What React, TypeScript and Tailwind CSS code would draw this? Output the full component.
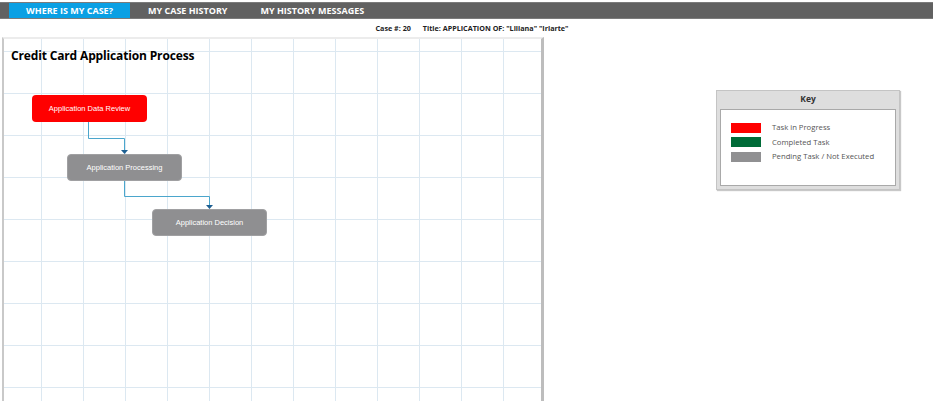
import React from 'react';

const font = { open: 'font-["Open_Sans",sans-serif]', arial: 'font-["Liberation_Sans",Arial,sans-serif]' };

const tabs = ['WHERE IS MY CASE?', 'MY CASE HISTORY', 'MY HISTORY MESSAGES'];

const legend = [
  { color: 'bg-[#ff0000]', label: 'Task in Progress' },
  { color: 'bg-[#006b38]', label: 'Completed Task' },
  { color: 'bg-[#909092]', label: 'Pending Task / Not Executed' },
];

function Node({ label, className }: { label: string; className: string }) {
  return (
    <div
      className={`absolute w-[115px] h-[27px] rounded-[4px] flex items-center justify-center text-white text-[7.5px] ${font.arial} ${className}`}
    >
      {label}
    </div>
  );
}

function Canvas() {
  const vLines = Array.from({ length: 13 }, (_, i) => 37.5 + i * 42);
  const hLines = Array.from({ length: 9 }, (_, i) => 12.5 + i * 42);
  return (
    <div className="relative w-[542px] h-[364px] border-l-2 border-r-[3px] border-t-2 border-l-[#c9c9c9] border-r-[#bdbdbd] border-t-[#ececec] overflow-hidden">
      <svg className="absolute inset-0" width="537" height="362">
        {vLines.map((x) => (
          <line key={'v' + x} x1={x} y1={0} x2={x} y2={362} stroke="#dce8f1" strokeWidth={1} />
        ))}
        {hLines.map((y) => (
          <line key={'h' + y} x1={0} y1={y} x2={537} y2={y} stroke="#dce8f1" strokeWidth={1} />
        ))}
        <polyline points="84.5,83 84.5,99.5 120.5,99.5 120.5,112" fill="none" stroke="#4ba6cc" strokeWidth={1} />
        <polygon points="117,111 124,111 120.5,115" fill="#1d5f92" />
        <polyline points="120.5,142 120.5,157.5 205.5,157.5 205.5,167" fill="none" stroke="#4ba6cc" strokeWidth={1} />
        <polygon points="202,166 209,166 205.5,170" fill="#1d5f92" />
      </svg>
      <div className={`absolute left-[7px] top-[8px] text-[12px] font-bold text-black ${font.open} tracking-[-0.15px]`}>
        Credit Card Application Process
      </div>
      <Node label="Application Data Review" className="left-[28px] top-[56px] bg-[#ff0000]" />
      <Node label="Application Processing" className="left-[63px] top-[115px] bg-[#8f8f91] border border-[#a0a0a2]" />
      <Node label="Application Decision" className="left-[148px] top-[170px] bg-[#8f8f91] border border-[#a0a0a2]" />
    </div>
  );
}

function Key() {
  return (
    <div className="w-[184px] h-[100px] mt-[53px] ml-[172px] border border-[#c4c4c4] bg-[#dedede] shadow-[1px_1px_1px_#c8c8c8]">
      <div className={`h-[16px] flex items-center justify-center text-[8.5px] font-bold text-[#333] ${font.open}`}>Key</div>
      <div className="mx-[3px] mt-[2px] h-[77px] bg-white border border-[#a9a9a9] pt-[12px] pl-[10px] flex flex-col gap-[3px]">
        {legend.map((l) => (
          <div key={l.label} className="flex items-center">
            <div className={`w-[30px] h-[10px] ${l.color}`} />
            <span className={`ml-[11px] text-[7.7px] text-[#555] ${font.open}`}>{l.label}</span>
          </div>
        ))}
      </div>
    </div>
  );
}

export default function App() {
  return (
    <div className="w-[933px] h-[401px] bg-white overflow-hidden">
      <div className="mt-[2px] h-[17px] bg-[#616161] border-y border-[#7b7b7b] flex">
        {tabs.map((t, i) => (
          <div
            key={t}
            className={`h-full flex items-center text-white font-bold text-[9px] ${font.open} ${
              i === 0 ? 'ml-[9px] w-[121px] justify-center bg-[#0aa0e4]' : i === 1 ? 'ml-[18px]' : 'ml-[33px]'
            }`}
          >
            {t}
          </div>
        ))}
      </div>
      <div className={`h-[18px] flex items-center justify-center pl-[11px] text-[7.2px] font-bold text-[#222] ${font.open}`}>
        <span>Case #: 20</span>
        <span className="ml-[12px]">Title: APPLICATION OF: "Liliana" "Iriarte"</span>
      </div>
      <div className="flex ml-[2px]">
        <Canvas />
        <Key />
      </div>
    </div>
  );
}
